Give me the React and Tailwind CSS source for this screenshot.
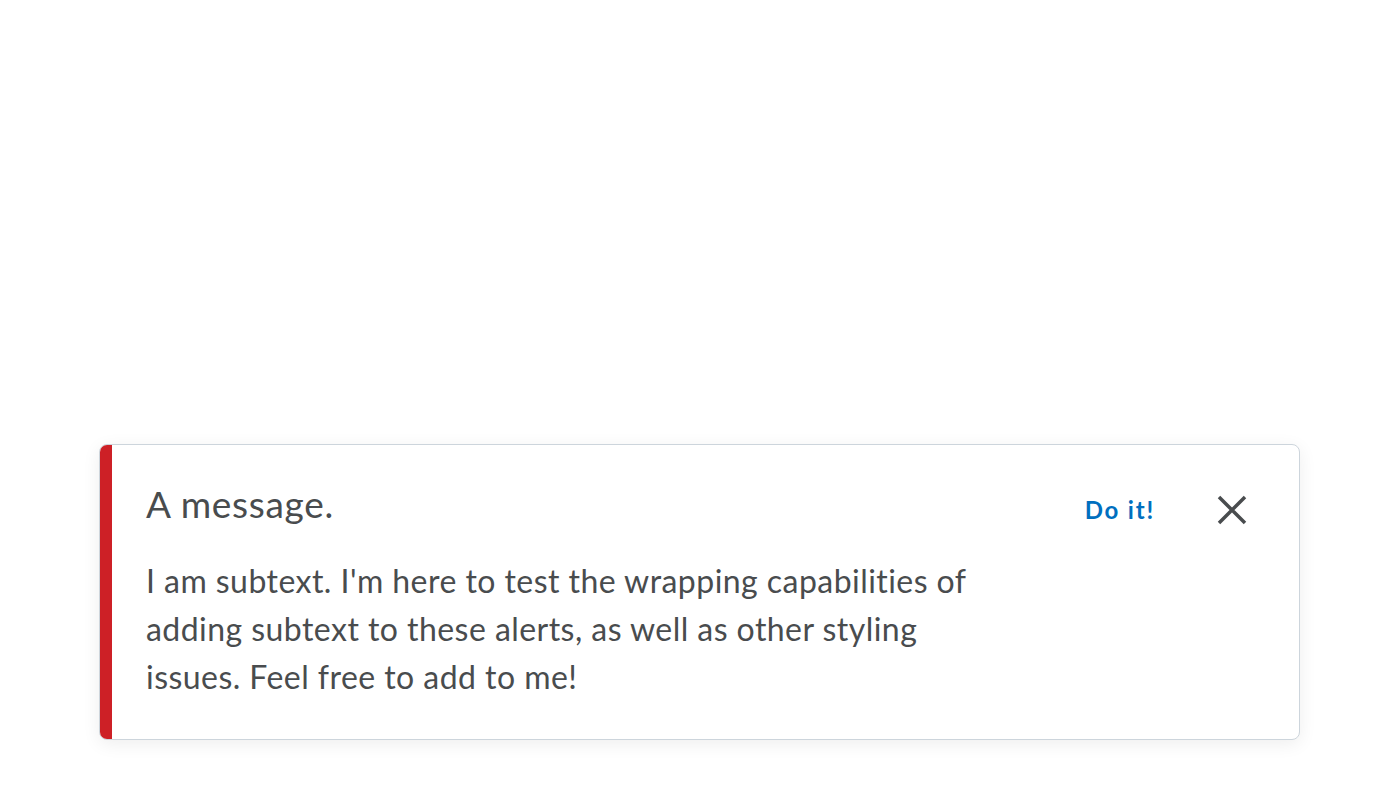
export default function App() {
  return (
    <div className="min-h-[800px] w-[1400px] bg-white pt-[444px] px-[100px]" style={{ fontFamily: "Lato, 'Noto Sans', sans-serif" }}>
      <div className="flex rounded-[8px] border border-[#cdd5dc] bg-white shadow-[0_4px_18px_rgba(0,0,0,0.07)] overflow-hidden h-[296px] -ml-px">
        <div className="w-[12px] bg-[#cd2026] shrink-0" />
        <div className="flex flex-1 items-start pl-[34px] pr-[50px] pt-[35px]">
          <div className="flex-1 text-[#494c4e]">
            <div className="text-[37px] leading-[48px] tracking-[0.7px]">A message.</div>
            <p className="mt-[29px] w-[850px] text-[32px] leading-[48px] tracking-[0.45px]">
              I am subtext. I'm here to test the wrapping capabilities of adding subtext to these alerts, as well as other styling issues. Feel free to add to me!
            </p>
          </div>
          <button className="mt-[14px] text-[24px] font-bold text-[#006fbf] leading-[32px] tracking-[1.8px]">Do it!</button>
          <button className="ml-[60px] mt-[13px] w-[34px] h-[34px] flex items-center justify-center text-[#494c4e]">
            <svg width="30" height="30" viewBox="0 0 30 30" fill="none" stroke="currentColor" strokeWidth="3.5" strokeLinecap="butt">
              <path d="M2 2 L28 28 M28 2 L2 28" />
            </svg>
          </button>
        </div>
      </div>
    </div>
  );
}
